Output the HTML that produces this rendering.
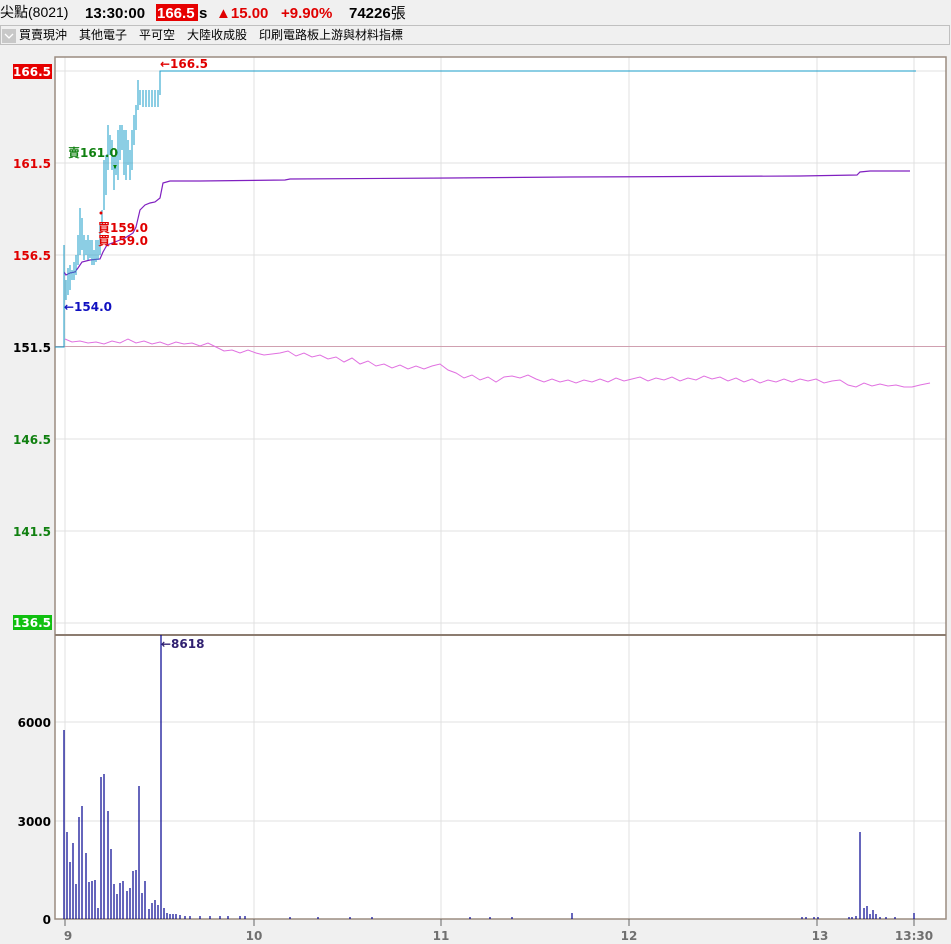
<!DOCTYPE html>
<html><head><meta charset="utf-8"><style>
html,body{margin:0;padding:0;background:#f0f0f0;width:951px;height:944px;overflow:hidden}
svg{display:block}
text{font-family:"Liberation Sans","Noto Sans CJK TC",sans-serif}
.b{font-weight:bold;font-size:12px;font-family:"DejaVu Sans","Noto Sans CJK TC",sans-serif}
</style></head><body>
<svg width="951" height="944" viewBox="0 0 951 944" xmlns="http://www.w3.org/2000/svg">
<rect width="951" height="944" fill="#f0f0f0"/>
<text x="0" y="17" font-size="14" fill="#000">尖點(8021)</text>
<text x="85" y="18" font-size="15" font-weight="bold" fill="#000">13:30:00</text>
<rect x="156" y="4" width="42" height="17" fill="#e60000"/>
<text x="157" y="18" font-size="15" font-weight="bold" fill="#fff">166.5</text>
<text x="199" y="18" font-size="15" font-weight="bold" fill="#000">s</text>
<text x="216" y="18" font-size="15" font-weight="bold" fill="#e00000">▲15.00</text>
<text x="281" y="18" font-size="15" font-weight="bold" fill="#e00000">+9.90%</text>
<text x="349" y="18" font-size="15" font-weight="bold" fill="#000">74226<tspan font-weight="normal">張</tspan></text>
<rect x="0.5" y="25.5" width="949" height="19" fill="#f0f0f0" stroke="#c0c0c0"/>
<rect x="2" y="29" width="14" height="14" fill="#c8c8c8"/>
<path d="M5 34 L9 38 L13 34" fill="none" stroke="#fff" stroke-width="1.3"/>
<text x="19" y="39" font-size="12" fill="#000">買賣現沖　其他電子　平可空　大陸收成股　印刷電路板上游與材料指標</text>
<rect x="55" y="57" width="891" height="862" fill="#fff"/>
<g stroke="#e0e0e0" stroke-width="1">
<path d="M65 57V919M254 57V919M441 57V919M629 57V919M817 57V919M914 57V919"/>
<path d="M55 71H946M55 163H946M55 255H946M55 439H946M55 531H946M55 623H946M55 722H946M55 821H946"/>
</g>
<path d="M55 346.5H946" stroke="#d0a0b0"/>
<rect x="55" y="57" width="891" height="862" fill="none" stroke="#9a8c80" stroke-width="1.5"/>
<path d="M55 635H946" stroke="#8c7c70" stroke-width="2"/>
<polyline fill="none" stroke="#e070e0" stroke-width="1" points="65,339 72,342 80,341 88,343 96,342 104,344 112,341 120,343 128,339 136,343 144,341 152,344 160,342 168,345 176,342 184,344 192,343 200,346 208,343 216,347 224,351 232,350 240,353 248,350 256,353 264,355 272,354 280,353 288,351 296,356 304,353 312,357 320,355 328,359 336,357 344,362 352,358 360,364 368,361 376,366 384,364 392,368 400,365 408,369 416,366 424,369 432,366 440,364 448,370 456,373 464,378 472,375 480,380 488,377 496,382 504,377 512,376 520,378 528,375 536,379 544,382 552,379 560,382 568,380 576,383 584,380 592,382 600,379 608,382 616,378 624,381 632,379 640,377 648,381 656,378 664,380 672,377 680,381 688,378 696,380 704,376 712,379 720,377 728,381 736,378 744,382 752,379 760,383 768,380 776,382 784,379 792,382 800,379 808,381 816,379 824,383 832,381 840,380 848,385 856,387 864,383 872,386 880,384 888,386 896,385 904,387 912,387 920,385 930,383"/>
<polyline fill="none" stroke="#8020c0" stroke-width="1.2" points="64,272 66,275 70,273 75,272 78,268 82,262 90,260 100,259 103,252 107,245 115,242 125,238 133,233 136,227 140,210 145,205 150,203 155,202 160,198 163,183 170,181 200,181 285,180 290,179 450,178 570,177 800,176 857,175 860,172 870,171 910,171"/>
<path fill="none" stroke="#1a9cc8" stroke-width="1" shape-rendering="crispEdges" d="M55 347H64V245M64 300V275M66 280V300M68 268V295M70 265V290M72 270V280M74 262V280M76 255V275M78 235V265M80 208V255M82 218V250M84 235V260M86 240V255M88 235V260M90 240V258M92 240V265M94 250V265M96 240V262M98 240V260M100 225V255M102 210V225M104 160V210M106 155V195M108 125V170M110 135V155M112 140V170M114 155V190M116 150V175M118 130V180M120 125V160M122 125V150M124 130V175M126 130V180M128 140V165M130 150V180M132 130V170M134 115V145M136 105V130M138 80V110M140 90V105M143 90V107M146 90V107M149 90V107M152 90V107M155 90V107M158 90V107M160 95V71H916"/>
<circle cx="101" cy="213" r="1.5" fill="#e00000"/>
<path d="M113 165l2 4 2-4z" fill="#008000"/>
<path stroke="#000090" stroke-width="1.2" d="M64 919V730M67 919V832M70 919V862M73 919V843M76 919V884M79 919V817M82 919V806M86 919V853M89 919V882M92 919V881M95 919V880M98 919V908M101 919V777M104 919V774M108 919V811M111 919V849M114 919V884M117 919V894M120 919V883M123 919V881M127 919V891M130 919V888M133 919V871M136 919V870M139 919V786M142 919V893M145 919V881M149 919V909M152 919V903M155 919V900M158 919V905M161 919V635M164 919V908M167 919V913M170 919V914M173 919V914M176 919V914M180 919V915M185 919V916M190 919V916M200 919V916M210 919V916M220 919V916M228 919V916M240 919V916M245 919V916M290 919V917M318 919V917M350 919V917M372 919V917M470 919V917M490 919V917M512 919V917M572 919V913M802 919V917M806 919V917M814 919V917M818 919V917M849 919V917M852 919V917M856 919V916M860 919V832M864 919V908M867 919V906M870 919V914M873 919V910M876 919V914M880 919V917M886 919V917M895 919V917M914 919V913"/>
<text x="160" y="68" class="b" fill="#e00000">←166.5</text>
<text x="68" y="157" class="b" fill="#108010">賣161.0</text>
<text x="98" y="232" class="b" fill="#e00000">買159.0</text>
<text x="98" y="245" class="b" fill="#e00000">買159.0</text>
<text x="64" y="311" class="b" fill="#1010c0">←154.0</text>
<text x="161" y="648" class="b" fill="#302070">←8618</text>
<rect x="13" y="64" width="39" height="15" fill="#e60000"/>
<text x="51" y="76" class="b" fill="#fff" text-anchor="end">166.5</text>
<text x="51" y="168" class="b" fill="#e00000" text-anchor="end">161.5</text>
<text x="51" y="260" class="b" fill="#e00000" text-anchor="end">156.5</text>
<text x="51" y="352" class="b" fill="#000" text-anchor="end">151.5</text>
<text x="51" y="444" class="b" fill="#108010" text-anchor="end">146.5</text>
<text x="51" y="536" class="b" fill="#108010" text-anchor="end">141.5</text>
<rect x="13" y="615" width="39" height="15" fill="#10c010"/>
<text x="51" y="627" class="b" fill="#fff" text-anchor="end">136.5</text>
<text x="51" y="727" class="b" fill="#000" text-anchor="end">6000</text>
<text x="51" y="826" class="b" fill="#000" text-anchor="end">3000</text>
<text x="51" y="924" class="b" fill="#000" text-anchor="end">0</text>
<path stroke="#666" d="M65 919V926M254 919V926M441 919V926M629 919V926M817 919V926M914 919V926"/>
<g fill="#707070" text-anchor="middle">
<text x="68" y="940" class="b">9</text>
<text x="254" y="940" class="b">10</text>
<text x="441" y="940" class="b">11</text>
<text x="629" y="940" class="b">12</text>
<text x="820" y="940" class="b">13</text>
<text x="914" y="940" class="b">13:30</text>
</g>
</svg>
</body></html>
